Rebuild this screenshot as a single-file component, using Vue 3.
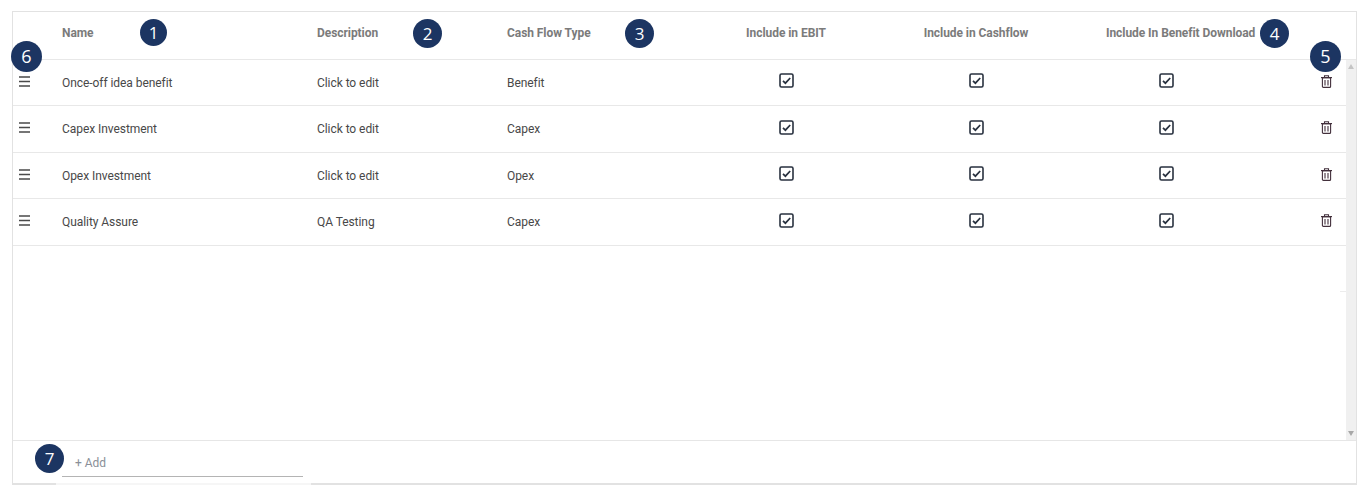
<script setup>
const rows = [
  { name: 'Once-off idea benefit', description: 'Click to edit', type: 'Benefit' },
  { name: 'Capex Investment', description: 'Click to edit', type: 'Capex' },
  { name: 'Opex Investment', description: 'Click to edit', type: 'Opex' },
  { name: 'Quality Assure', description: 'QA Testing', type: 'Capex' }
]
const badges = [
  { n: 1, cls: 'b1' }, { n: 2, cls: 'b2' }, { n: 3, cls: 'b3' }, { n: 4, cls: 'b4' },
  { n: 5, cls: 'b5' }, { n: 6, cls: 'b6' }, { n: 7, cls: 'b7' }
]
</script>

<template>
  <div class="page">
    <div class="panel">
      <div class="head grid">
        <div></div>
        <div>Name</div>
        <div>Description</div>
        <div>Cash Flow Type</div>
        <div class="center">Include in EBIT</div>
        <div class="center">Include in Cashflow</div>
        <div class="dl">Include In Benefit Download</div>
        <div></div>
      </div>
      <div class="body">
        <div class="rows">
          <div v-for="r in rows" :key="r.name" class="row grid">
            <div class="drag">
              <svg width="11" height="11" viewBox="0 0 11 11"><path d="M0 1h11M0 5.5h11M0 10h11" stroke="#4a4a4a" stroke-width="1.4" fill="none"/></svg>
            </div>
            <div>{{ r.name }}</div>
            <div>{{ r.description }}</div>
            <div>{{ r.type }}</div>
            <div v-for="c in 3" :key="c" class="center check">
              <svg width="15" height="15" viewBox="0 0 15 15">
                <rect x="1" y="1" width="13" height="13" rx="1.5" fill="#fff" stroke="#28313f" stroke-width="1.6"/>
                <path d="M4 7.8l2.4 2.4L11.2 5" stroke="#28313f" stroke-width="1.7" fill="none"/>
              </svg>
            </div>
            <div class="trash">
              <svg width="11" height="13" viewBox="0 0 11 13" fill="none" stroke="#43303c" stroke-width="1.1">
                <path d="M0 2.6h11M3.5 2.4V.7h4v1.7"/>
                <rect x="1.4" y="2.8" width="8.2" height="9.6" rx="1"/>
                <path d="M4 5v5.4M7 5v5.4"/>
              </svg>
            </div>
          </div>
          <span class="tick"></span>
        </div>
        <div class="scroll">
          <span class="arrow up"></span>
          <span class="arrow down"></span>
        </div>
      </div>
      <div class="foot">
        <div class="add">+ Add</div>
      </div>
      <span class="fade"></span>
    </div>
    <div v-for="b in badges" :key="b.n" class="badge" :class="b.cls">{{ b.n }}</div>
  </div>
</template>

<style scoped>
.page {
  position: relative;
  width: 1366px;
  height: 495px;
  box-sizing: border-box;
  padding: 11px 9px 10px 12px;
  background: #fff;
  font-family: Roboto, "Liberation Sans", sans-serif;
  font-size: 12px;
  letter-spacing: -0.06px;
  color: #484848;
  overflow: hidden;
}
.panel {
  position: relative;
  height: 100%;
  box-sizing: border-box;
  border: 1px solid #e2e2e2;
  border-bottom: 2px solid #e2e2e2;
  display: flex;
  flex-direction: column;
}
.grid {
  display: grid;
  grid-template-columns: 49px 255px 190px 184px 190px 190px 190px 85px;
  align-items: center;
}
.head {
  height: 48px;
  box-sizing: border-box;
  border-bottom: 1px solid #e8e8e8;
  font-weight: 700;
  color: #7b7b7b;
  padding-bottom: 5px;
}
.center { text-align: center; }
.dl { white-space: nowrap; padding-left: 35px; }
.body {
  flex: 1;
  display: flex;
  min-height: 0;
}
.rows {
  position: relative;
  flex: 1;
}
.row {
  height: 46px;
  box-sizing: border-box;
  border-bottom: 1px solid #e8e8e8;
}
.row:nth-child(even) { height: 47px; }
.drag {
  display: flex;
  padding-left: 6px;
  margin-top: -3px;
}
.check {
  display: flex;
  justify-content: center;
  margin-top: -4px;
}
.trash {
  display: flex;
  justify-content: flex-end;
  padding-right: 14px;
  margin-top: -3px;
}
.tick {
  position: absolute;
  right: 0;
  top: 231px;
  width: 6px;
  border-top: 1px solid #ececec;
}
.scroll {
  position: relative;
  width: 11px;
  background: #f0f0f0;
}
.arrow {
  position: absolute;
  left: 2px;
  border-left: 3.5px solid transparent;
  border-right: 3.5px solid transparent;
}
.up { top: 4px; border-bottom: 5px solid #c4c4c4; }
.down { bottom: 4px; border-top: 5px solid #a8a8a8; }
.foot {
  height: 43px;
  box-sizing: border-box;
  border-top: 1px solid #e6e6e6;
  padding-left: 49px;
}
.add {
  width: 241px;
  height: 36px;
  box-sizing: border-box;
  padding: 15px 0 0 13px;
  border-bottom: 1px solid #b4b4b4;
  color: #8a8f98;
}
.fade {
  position: absolute;
  left: 43px;
  bottom: -2px;
  width: 255px;
  height: 2px;
  background: #f6f6f6;
}
.badge {
  position: absolute;
  box-sizing: border-box;
  width: 29px;
  height: 29px;
  border-radius: 50%;
  background: #1c3562;
  color: #fff;
  font-family: "Open Sans", "Noto Sans", sans-serif;
  font-size: 17px;
  letter-spacing: 0;
  line-height: 29px;
  text-align: center;
}
.b1 { left: 140px; top: 19px; width: 27px; height: 27px; line-height: 27px; }
.b2 { left: 413px; top: 19px; }
.b3 { left: 625px; top: 19px; }
.b4 { left: 1260px; top: 19px; }
.b5 { left: 1310px; top: 41px; width: 31px; height: 31px; line-height: 31px; font-size: 18px; }
.b6 { left: 11px; top: 41px; width: 31px; height: 31px; line-height: 31px; font-size: 18px; }
.b7 { left: 35px; top: 444px; }
</style>
